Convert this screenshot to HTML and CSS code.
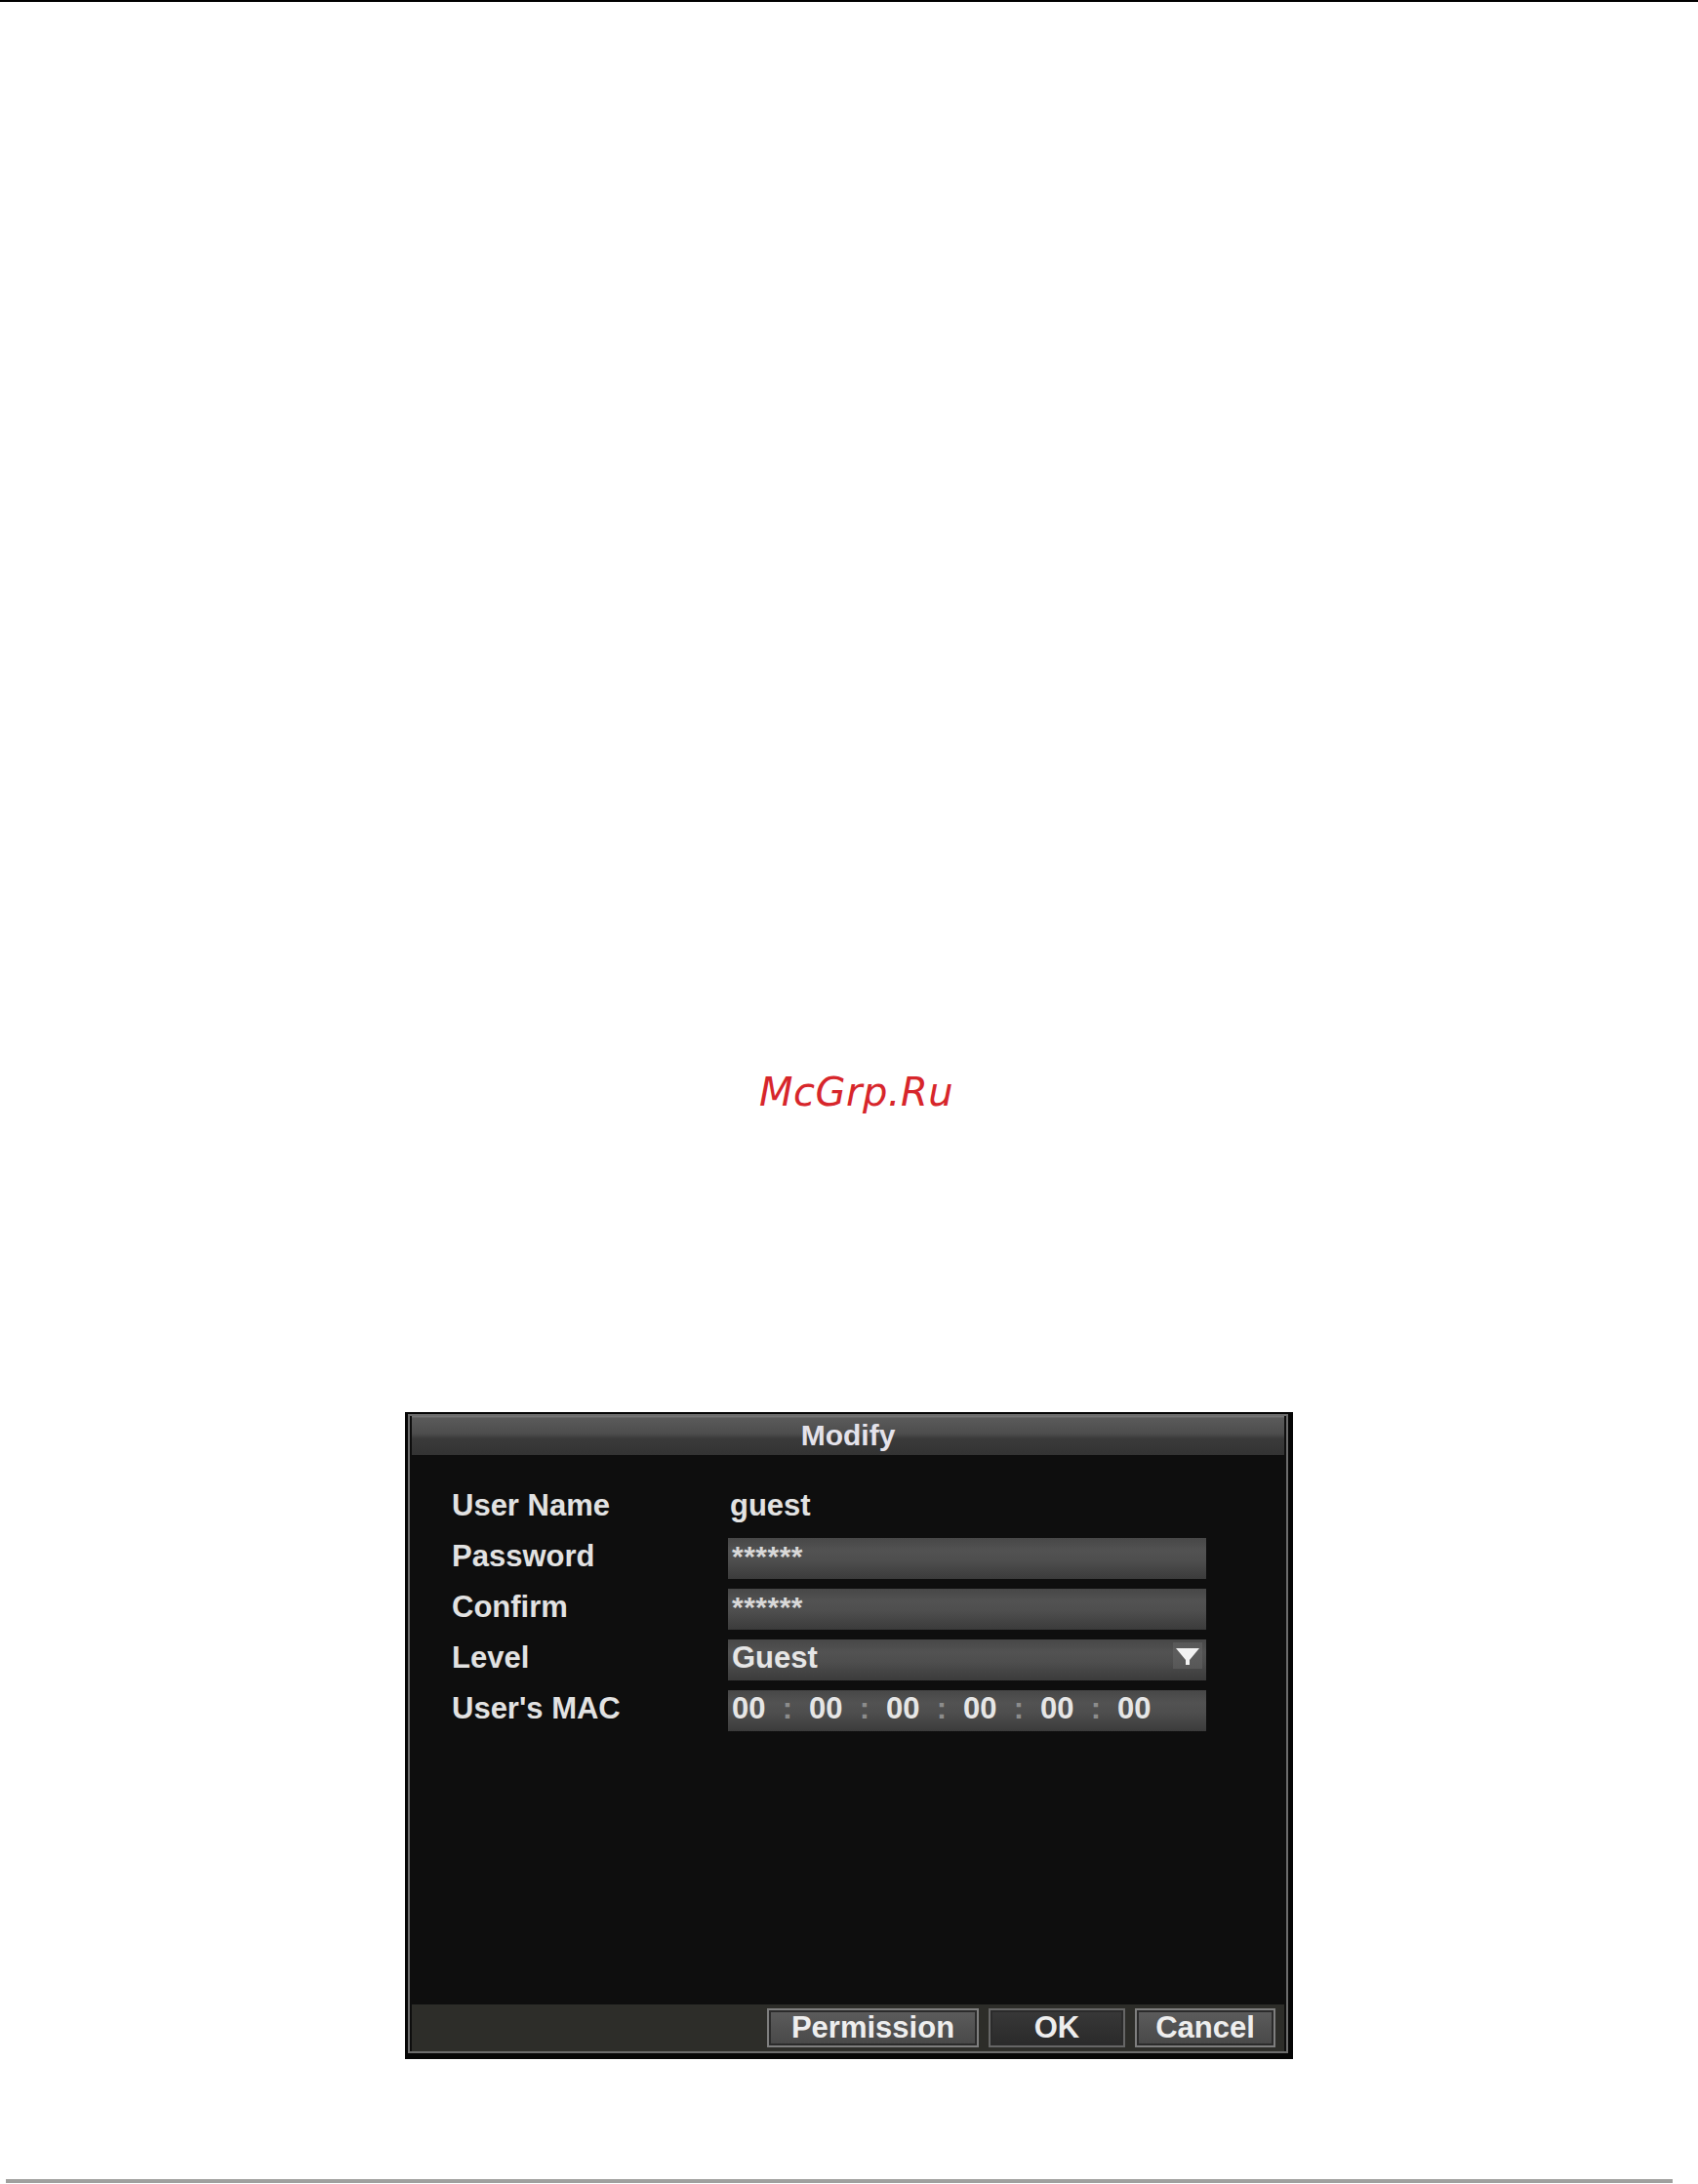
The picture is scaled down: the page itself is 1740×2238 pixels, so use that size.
FILE: index.html
```html
<!DOCTYPE html>
<html lang="en">
<head>
<meta charset="utf-8">
<title>Modify</title>
<link rel="stylesheet" href="styles.css">
</head>
<body>
<div class="topline"></div>
<div class="watermark">McGrp.Ru</div>
<div class="dialog">
  <div class="titlebar">Modify</div>
  <div class="dialog-body">
    <div class="form">
      <div class="label">User Name</div>
      <div class="value">guest</div>
      <div class="label">Password</div>
      <div class="field"><span class="mask">******</span></div>
      <div class="label">Confirm</div>
      <div class="field"><span class="mask">******</span></div>
      <div class="label">Level</div>
      <div class="field select">
        <span>Guest</span>
        <svg class="arrow" width="32" height="30" viewBox="0 0 32 30">
          <rect x="1" y="1" width="30" height="27" fill="#6a6a6a" opacity="0.45"/>
          <polygon points="4,7 28,7 18,19 18,24 14,24 14,19" fill="#f2f2f2"/>
        </svg>
      </div>
      <div class="label">User's MAC</div>
      <div class="field mac">
        <span class="oct">00</span><span class="sep">:</span>
        <span class="oct">00</span><span class="sep">:</span>
        <span class="oct">00</span><span class="sep">:</span>
        <span class="oct">00</span><span class="sep">:</span>
        <span class="oct">00</span><span class="sep">:</span>
        <span class="oct">00</span>
      </div>
    </div>
  </div>
  <div class="footer">
    <button class="btn btn-perm">Permission</button>
    <button class="btn btn-ok">OK</button>
    <button class="btn btn-cancel">Cancel</button>
  </div>
</div>
<div class="bottomline"></div>
</body>
</html>
```
FILE: styles.css
```css
html, body {
  margin: 0;
  padding: 0;
  background: #ffffff;
}
body {
  width: 1740px;
  height: 2238px;
  overflow: hidden;
  font-family: "Liberation Sans", Arial, sans-serif;
}
.topline {
  height: 2px;
  background: #000;
}
.watermark {
  margin-top: 1093px;
  height: 48px;
  line-height: 48px;
  padding-left: 778px;
  font-family: "DejaVu Sans", sans-serif;
  font-style: oblique;
  font-size: 40px;
  letter-spacing: 0.5px;
  color: #d7262b;
}
.dialog {
  margin-top: 304px;
  margin-left: 415px;
  width: 910px;
  box-sizing: border-box;
  border-style: solid;
  border-color: #060606;
  border-width: 2px 5px 6px 3px;
  padding: 2px 4px;
  background: #0e0e0e;
  box-shadow: inset 0 0 0 2px #6c6c6c;
  display: flex;
  flex-direction: column;
}
.titlebar {
  height: 40px;
  line-height: 40px;
  text-align: center;
  font-weight: bold;
  font-size: 30px;
  color: #e4e2ea;
  background: linear-gradient(to bottom, #7a7a7a 0, #5a5a5a 6%, #4d4d4d 45%, #3a3a3a 58%, #333 100%);
}
.dialog-body {
  height: 563px;
  box-sizing: border-box;
  padding: 33px 0 0 41px;
  background: #0e0e0e;
}
.form {
  display: grid;
  grid-template-columns: 283px 490px;
  grid-auto-rows: 42px;
  row-gap: 10px;
  font-weight: bold;
  font-size: 31px;
  color: #e2e2e2;
}
.label, .value {
  line-height: 38px;
  white-space: nowrap;
}
.value {
  padding-left: 2px;
}
.field {
  position: relative;
  box-sizing: border-box;
  height: 42px;
  line-height: 38px;
  padding-left: 4px;
  background: linear-gradient(to bottom, #474747 0%, #525252 30%, #4e4e4e 55%, #3b3b3b 100%);
  color: #e6e6e6;
  white-space: nowrap;
}
.mask {
  font-size: 30px;
  letter-spacing: 0.5px;
  color: #d8d8d8;
}
.select {
  display: flex;
  align-items: flex-start;
  justify-content: space-between;
  padding-right: 3px;
}
.arrow {
  margin-top: 2px;
}
.mac {
  display: flex;
  padding-left: 4px;
}
.oct {
  width: 35px;
}
.sep {
  width: 44px;
  text-align: center;
  color: #8c8c8c;
}
.footer {
  height: 48px;
  box-sizing: border-box;
  padding: 4px 9px 0 0;
  background: #2d2d29;
  display: flex;
  justify-content: flex-end;
  align-items: flex-start;
  gap: 10px;
}
.btn {
  height: 40px;
  box-sizing: border-box;
  margin: 0;
  padding: 0;
  border: 2px solid #7e7e7e;
  box-shadow: inset 0 0 0 2px #2b2b2b;
  background: linear-gradient(to bottom, #5c5c5c, #484848);
  font-family: "Liberation Sans", Arial, sans-serif;
  font-weight: bold;
  font-size: 31px;
  line-height: 34px;
  color: #eeeeee;
}
.btn-perm { width: 217px; }
.btn-ok {
  width: 140px;
  background: linear-gradient(to bottom, #383838, #2a2a2a);
  border-color: #666;
}
.btn-cancel { width: 144px; }
.bottomline {
  margin-top: 123px;
  margin-left: 6px;
  width: 1708px;
  height: 4px;
  background: #a0a09e;
}
```
